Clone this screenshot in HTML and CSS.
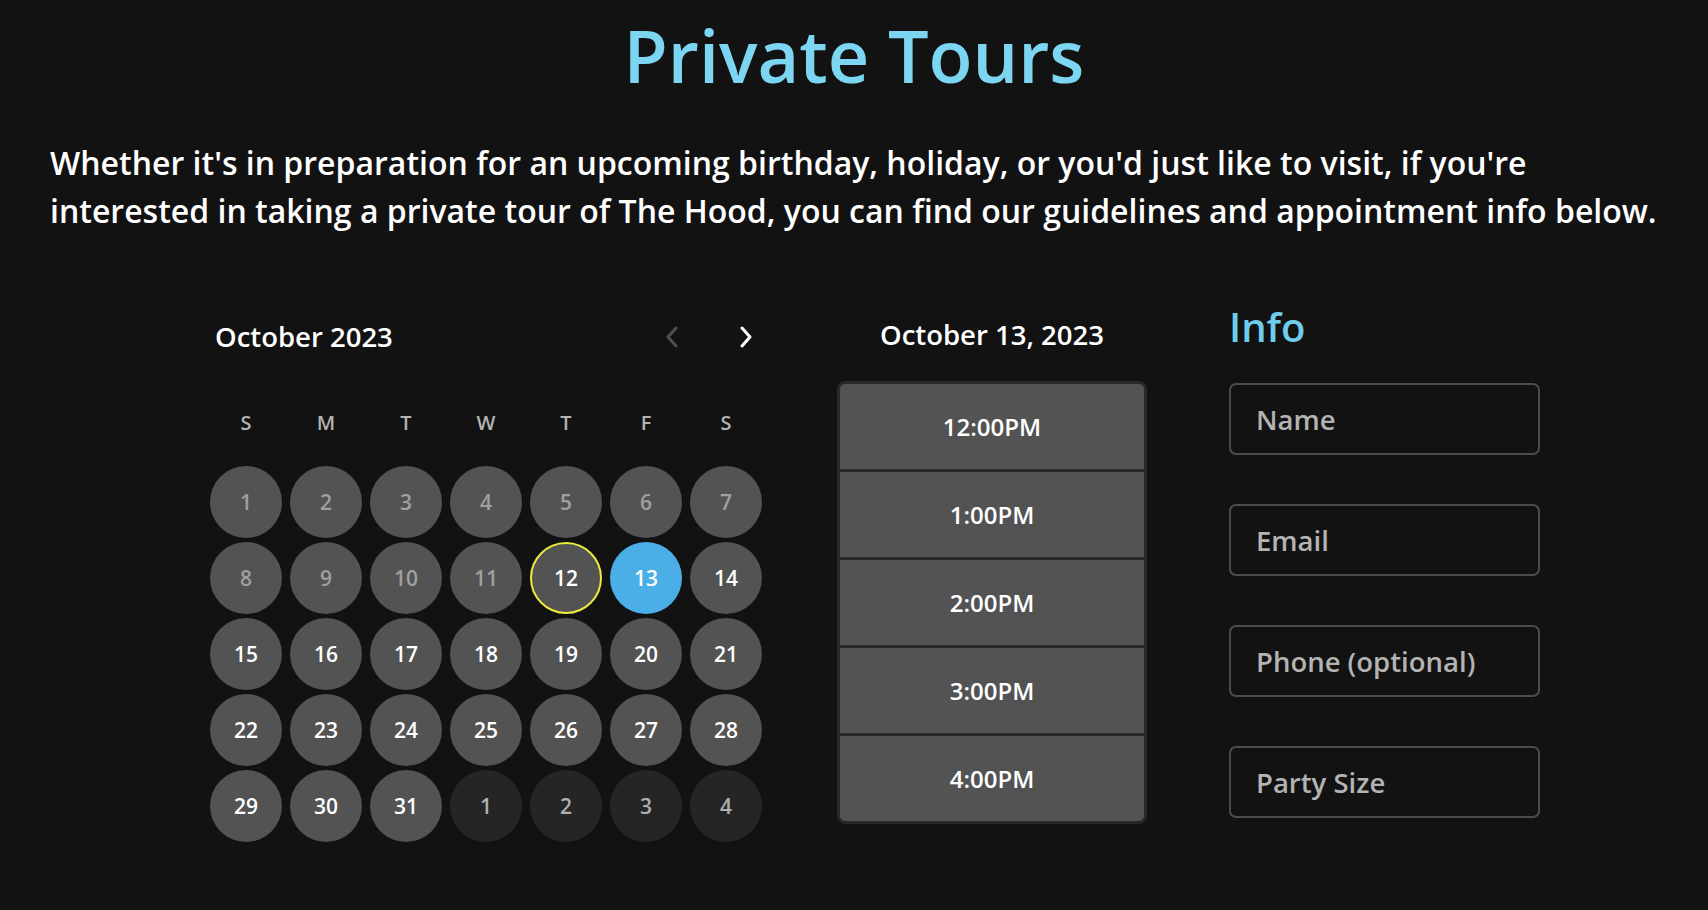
FILE: index.html
```html
<!DOCTYPE html>
<html lang="en">
<head>
<meta charset="utf-8">
<title>Private Tours</title>
<link rel="stylesheet" href="styles.css">
</head>
<body>
<main class="page">
  <h1 class="title">Private Tours</h1>
  <p class="intro">Whether it's in preparation for an upcoming birthday, holiday, or you'd just like to visit, if you're interested in taking a private tour of The Hood, you can find our guidelines and appointment info below.</p>

  <section class="booking">
    <div class="calendar">
      <div class="cal-head">
        <span class="month">October 2023</span>
        <div class="nav">
          <button class="nav-btn nav-prev" aria-label="Previous month">
            <svg width="14" height="22" viewBox="0 0 14 22"><path d="M11 2 L3 11 L11 20" fill="none" stroke="currentColor" stroke-width="3" stroke-linecap="round" stroke-linejoin="round"/></svg>
          </button>
          <button class="nav-btn nav-next" aria-label="Next month">
            <svg width="14" height="22" viewBox="0 0 14 22"><path d="M3 2 L11 11 L3 20" fill="none" stroke="currentColor" stroke-width="3" stroke-linecap="round" stroke-linejoin="round"/></svg>
          </button>
        </div>
      </div>
      <div class="weekdays">
        <span>S</span><span>M</span><span>T</span><span>W</span><span>T</span><span>F</span><span>S</span>
      </div>
      <div class="days">
        <button class="day past">1</button>
        <button class="day past">2</button>
        <button class="day past">3</button>
        <button class="day past">4</button>
        <button class="day past">5</button>
        <button class="day past">6</button>
        <button class="day past">7</button>
        <button class="day past">8</button>
        <button class="day past">9</button>
        <button class="day past">10</button>
        <button class="day past">11</button>
        <button class="day today">12</button>
        <button class="day selected">13</button>
        <button class="day">14</button>
        <button class="day">15</button>
        <button class="day">16</button>
        <button class="day">17</button>
        <button class="day">18</button>
        <button class="day">19</button>
        <button class="day">20</button>
        <button class="day">21</button>
        <button class="day">22</button>
        <button class="day">23</button>
        <button class="day">24</button>
        <button class="day">25</button>
        <button class="day">26</button>
        <button class="day">27</button>
        <button class="day">28</button>
        <button class="day">29</button>
        <button class="day">30</button>
        <button class="day">31</button>
        <button class="day other">1</button>
        <button class="day other">2</button>
        <button class="day other">3</button>
        <button class="day other">4</button>
      </div>
    </div>

    <div class="times">
      <h2 class="date">October 13, 2023</h2>
      <div class="slots">
        <button class="slot">12:00PM</button>
        <button class="slot">1:00PM</button>
        <button class="slot">2:00PM</button>
        <button class="slot">3:00PM</button>
        <button class="slot">4:00PM</button>
      </div>
    </div>

    <form class="info">
      <h2 class="info-title">Info</h2>
      <input class="field" type="text" placeholder="Name">
      <input class="field" type="email" placeholder="Email">
      <input class="field" type="tel" placeholder="Phone (optional)">
      <input class="field" type="number" placeholder="Party Size">
    </form>
  </section>
</main>
</body>
</html>
```

FILE: styles.css
```css
* { box-sizing: border-box; }

html, body {
  margin: 0;
  padding: 0;
  background: #121212;
}

body {
  font-family: "Open Sans", "Noto Sans", "Liberation Sans", sans-serif;
  color: #ffffff;
}

.page {
  padding: 6px 45px 0 50px;
}

.title {
  margin: 0 5px 0 0;
  font-size: 72px;
  line-height: 98px;
  font-weight: 600;
  color: #7dd6f1;
  text-align: center;
}

.intro {
  margin: 35px 0 0;
  font-size: 32px;
  line-height: 48px;
  font-weight: 600;
  color: #ffffff;
}

.booking {
  display: flex;
  align-items: flex-start;
  margin-top: 65px;
  padding-left: 160px;
}

/* Calendar */
.calendar {
  width: 552px;
}

.cal-head {
  height: 74px;
  display: flex;
  align-items: center;
  justify-content: space-between;
  padding-left: 5px;
}

.month {
  font-size: 27.5px;
  line-height: 38px;
  font-weight: 600;
}

.nav {
  display: flex;
  gap: 42px;
}

.nav-btn {
  width: 32px;
  height: 32px;
  padding: 0;
  border: 0;
  background: none;
  display: flex;
  align-items: center;
  justify-content: center;
  cursor: pointer;
}

.nav-prev { color: #505050; }
.nav-next { color: #ffffff; }

.weekdays {
  margin-top: 35px;
  display: grid;
  grid-template-columns: repeat(7, 72px);
  column-gap: 8px;
  font-size: 20px;
  line-height: 27px;
  font-weight: 600;
  color: #b3b3b3;
  text-align: center;
}

.days {
  margin-top: 30px;
  display: grid;
  grid-template-columns: repeat(7, 72px);
  grid-auto-rows: 72px;
  column-gap: 8px;
  row-gap: 4px;
}

.day {
  width: 72px;
  height: 72px;
  border-radius: 50%;
  border: 0;
  padding: 0;
  background: #535353;
  color: #ffffff;
  font-family: inherit;
  font-size: 21px;
  font-weight: 600;
  cursor: pointer;
}

.day.past { color: #a0a0a0; }

.day.today {
  border: 2px solid #ecea3c;
}

.day.selected {
  background: #4baee6;
  color: #ffffff;
}

.day.other {
  background: #252525;
  color: #b0b0b0;
}

/* Times */
.times {
  width: 310px;
  margin-left: 75px;
}

.date {
  margin: 0 0 13px;
  height: 68px;
  display: flex;
  align-items: center;
  justify-content: center;
  font-size: 27.5px;
  font-weight: 600;
}

.slots {
  display: flex;
  flex-direction: column;
  gap: 3px;
  padding: 3px;
  background: #282828;
  border-radius: 8px;
}

.slot {
  height: 85px;
  border: 0;
  padding: 0;
  background: #535353;
  color: #ffffff;
  font-family: inherit;
  font-size: 24px;
  font-weight: 600;
  cursor: pointer;
}

.slot:first-child { border-radius: 5px 5px 0 0; }
.slot:last-child { border-radius: 0 0 5px 5px; }

/* Info form */
.info {
  width: 311px;
  margin-left: 82px;
  display: flex;
  flex-direction: column;
  gap: 49px;
}

.info-title {
  margin: 0 0 -20px;
  font-size: 40px;
  line-height: 54px;
  font-weight: 600;
  color: #6fcdec;
}

.field {
  height: 72px;
  width: 100%;
  border: 2px solid #4c4c4c;
  border-radius: 7px;
  background: transparent;
  padding: 0 25px;
  font-family: inherit;
  font-size: 27.5px;
  font-weight: 600;
  color: #ffffff;
  outline: none;
}

.field::placeholder {
  color: #b3b3b3;
  opacity: 1;
}
```
